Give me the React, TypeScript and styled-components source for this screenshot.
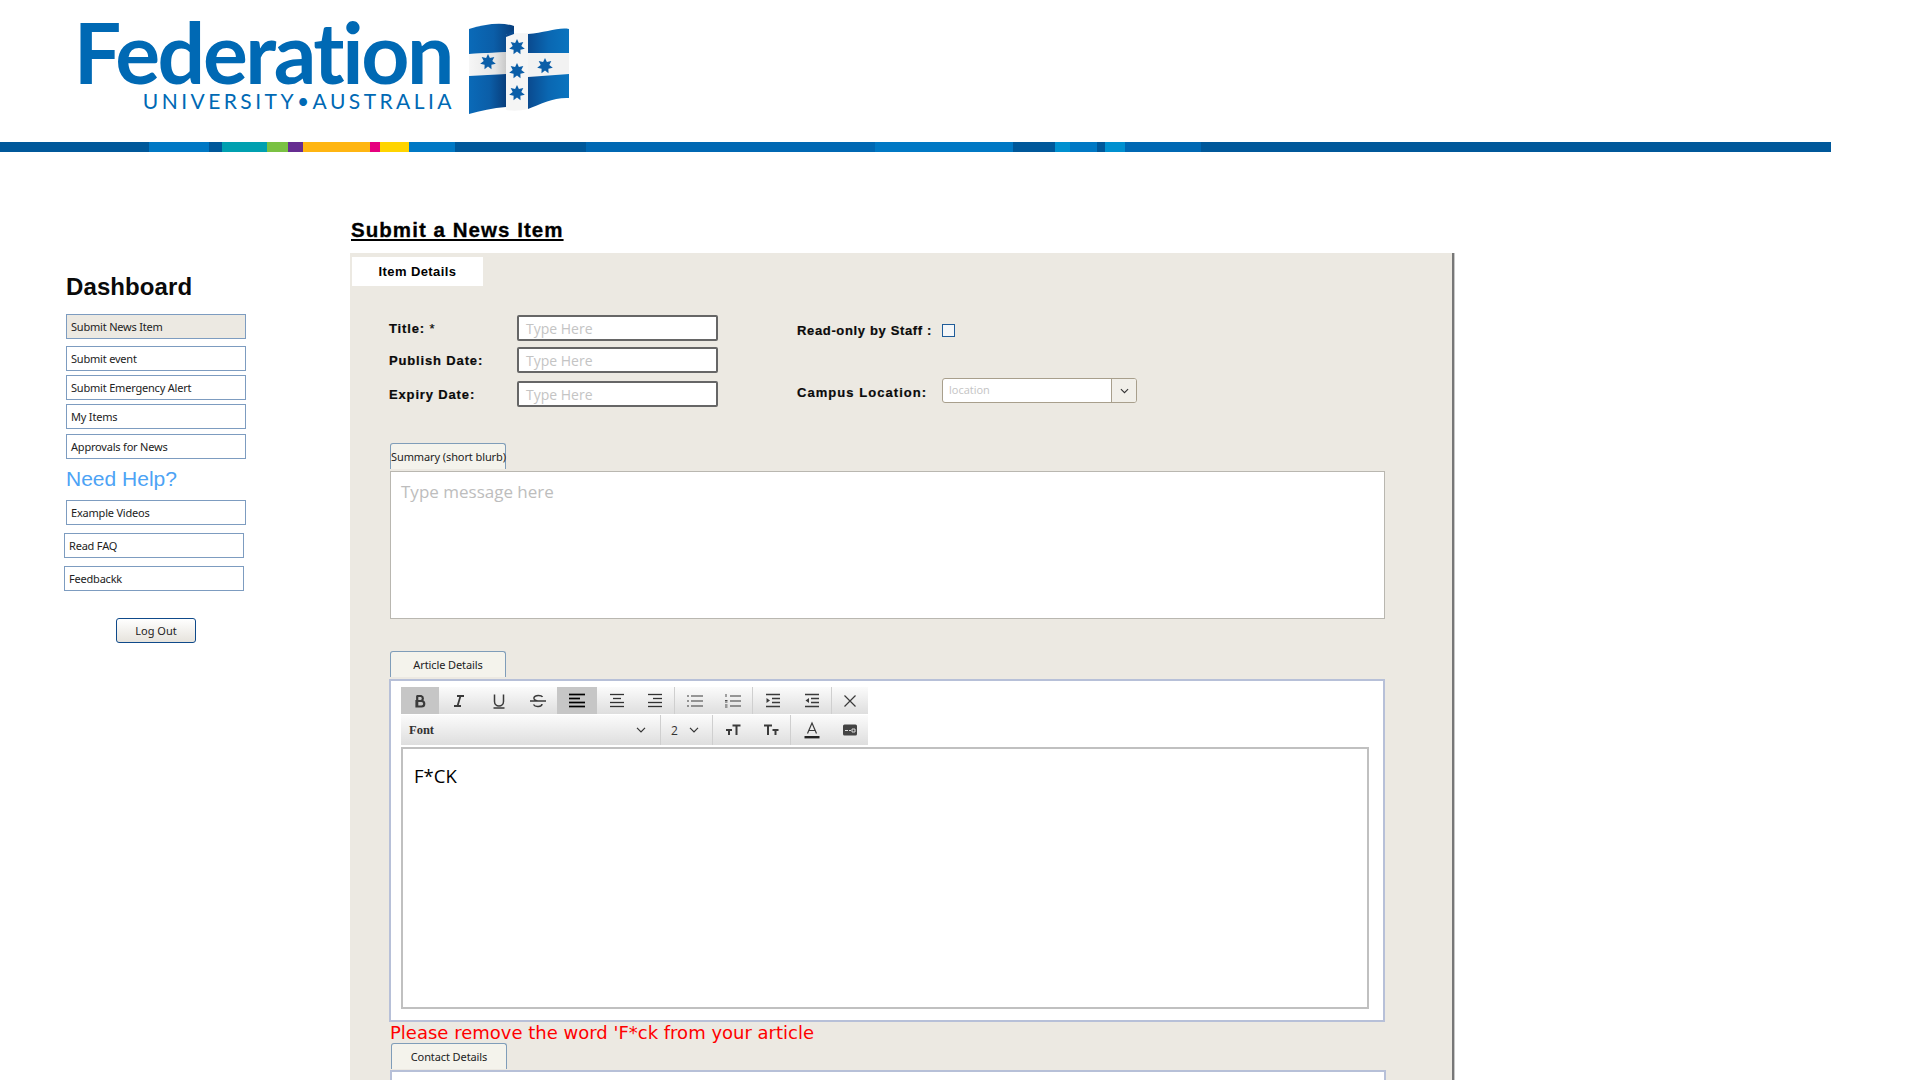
import { ReactNode } from "react";
import styled, { createGlobalStyle } from "styled-components";

const DARK = "#00589a";
const BLUE = "#0078c4";
const MID = "#0068b3";
const SKY = "#0090d0";

// widths of the stripe blocks, left to right
const stripes: [number, string][] = [
  [149, DARK], [60, BLUE], [13, DARK], [45, "#00a0b0"], [21, "#7ac143"],
  [15, "#662d91"], [67, "#ffb511"], [10, "#e6007e"], [29, "#ffd400"],
  [46, BLUE], [131, DARK], [289, MID], [138, BLUE], [42, DARK], [15, SKY],
  [27, BLUE], [8, DARK], [20, SKY], [76, MID], [630, DARK],
];

const GlobalStyle = createGlobalStyle`
  html, body {
    margin: 0;
    padding: 0;
    height: 1080px;
    overflow: hidden;
    background: #fff;
  }
  * {
    box-sizing: border-box;
  }
`;

const Page = styled.div`
  width: 1920px;
  height: 1080px;
  overflow: hidden;
  font-family: "Liberation Sans", Arial, sans-serif;
`;

const Header = styled.header`
  height: 142px;
  padding: 10px 0 0 78px;
  display: flex;
  align-items: flex-start;
`;

const LogoText = styled.div`
  width: 374px;
  padding-top: 6px;
  display: flex;
  flex-direction: column;
  align-items: flex-end;
  color: #0069b4;
`;

const LogoName = styled.div`
  font-family: Lato, sans-serif;
  font-size: 84px;
  font-weight: 700;
  line-height: 72px;
  letter-spacing: -2.4px;
  white-space: nowrap;
`;

const LogoSub = styled.div`
  font-family: Lato, sans-serif;
  font-size: 21px;
  line-height: 20px;
  letter-spacing: 3.45px;
  margin: 3px -3px 0 0;
  white-space: nowrap;
`;

const FlagBox = styled.div`
  margin: 0 0 0 8px;
  line-height: 0;
`;

const StripeBar = styled.div`
  display: flex;
  height: 10px;
  width: 1831px;
`;

const Stripe = styled.div<{ $w: number; $c: string }>`
  flex: 0 0 ${(p) => p.$w}px;
  background: ${(p) => p.$c};
`;

const Content = styled.div`
  display: flex;
  align-items: flex-start;
`;

const Sidebar = styled.aside`
  width: 350px;
  flex: none;
  padding: 119px 0 0 66px;
`;

const SideTitle = styled.h2`
  margin: 0 0 11px;
  font-size: 24px;
  line-height: 32px;
  font-weight: 700;
  color: #0a0a0a;
  letter-spacing: 0.1px;
`;

const HelpTitle = styled.h3`
  margin: 4px 0 5px;
  font-size: 21px;
  line-height: 32px;
  font-weight: 400;
  color: #4da3f5;
`;

const NavItem = styled.div<{ $active?: boolean; $top?: number; $left?: number }>`
  width: 180px;
  height: 25px;
  margin-top: ${(p) => p.$top ?? 0}px;
  margin-left: ${(p) => p.$left ?? 0}px;
  padding-left: 4px;
  border: 1px solid #7d9cc0;
  background: ${(p) => (p.$active ? "#ece9e2" : "#fff")};
  color: #222;
  font-family: "Noto Sans", sans-serif;
  font-size: 11px;
  line-height: 23px;
  letter-spacing: -0.2px;
  white-space: nowrap;
`;

const LogoutRow = styled.div`
  width: 180px;
  margin-top: 27px;
  display: flex;
  justify-content: center;
`;

const LogoutButton = styled.div`
  width: 80px;
  height: 25px;
  border: 1px solid #0f4a8a;
  border-radius: 3px;
  background: linear-gradient(#fff, #e6e3dc);
  color: #222;
  font-family: "Noto Sans", sans-serif;
  font-size: 11px;
  line-height: 23px;
  text-align: center;
`;

const Main = styled.main`
  width: 1106px;
  flex: none;
  padding-top: 65px;
`;

const PageTitle = styled.h1`
  margin: 0 0 11px 1px;
  font-size: 20.5px;
  line-height: 25px;
  font-weight: 700;
  letter-spacing: 1.05px;
  color: #000;
  text-decoration: underline;
  -webkit-text-stroke: 0.3px #000;
`;

const Panel = styled.section`
  width: 1104px;
  min-height: 900px;
  padding: 4px 0 0 2px;
  background: #ece9e2;
  border-right: 2px solid #777;
  box-shadow: 1px 0 0 #c9c9c9;
`;

const DetailsTab = styled.div`
  width: 131px;
  height: 29px;
  background: #fff;
  font-size: 13px;
  font-weight: 700;
  line-height: 29px;
  letter-spacing: 0.4px;
  text-align: center;
  color: #000;
`;

const PanelBody = styled.div`
  padding: 29px 0 0 38px;
`;

const FormGrid = styled.div`
  display: flex;
  height: 92px;
`;

const FieldColumn = styled.div`
  width: 407px;
  display: flex;
  flex-direction: column;
`;

const FieldRow = styled.div<{ $top?: number }>`
  display: flex;
  align-items: center;
  height: 26px;
  margin-top: ${(p) => p.$top ?? 0}px;
`;

const Label = styled.label`
  width: 128px;
  margin-left: -1px;
  flex: none;
  font-size: 13px;
  font-weight: 700;
  letter-spacing: 0.85px;
  color: #0a0a0a;
  white-space: nowrap;
  -webkit-text-stroke: 0.2px #0a0a0a;
`;

const Stars = styled.span`
  font-weight: 400;
`;

const TextField = styled.div`
  width: 201px;
  height: 26px;
  padding-left: 7px;
  border: 2px solid #666;
  border-radius: 2px;
  background: #fff;
  color: #c4c4c4;
  font-family: "Open Sans", sans-serif;
  font-size: 14px;
  line-height: 24px;
`;

const OptionColumn = styled.div`
  display: flex;
  flex-direction: column;
`;

const OptionRow = styled.div<{ $top: number }>`
  display: flex;
  align-items: center;
  height: 25px;
  margin-top: ${(p) => p.$top}px;
`;

const OptionLabel = styled.label<{ $spacing: number; $drop?: number }>`
  width: 145px;
  flex: none;
  padding-top: ${(p) => p.$drop ?? 0}px;
  font-size: 13px;
  font-weight: 700;
  letter-spacing: ${(p) => p.$spacing}px;
  color: #0a0a0a;
  white-space: nowrap;
  -webkit-text-stroke: 0.2px #0a0a0a;
`;

const CheckBox = styled.div`
  width: 13px;
  height: 13px;
  border: 1px solid #1f5c99;
  background: #f4f6f8;
`;

const LocationSelect = styled.div`
  width: 195px;
  height: 25px;
  display: flex;
  border: 1px solid #a89f8c;
  border-radius: 3px;
  background: #fff;
  overflow: hidden;
`;

const LocationText = styled.div`
  flex: 1;
  padding-left: 6px;
  color: #c4c4c4;
  font-family: "Open Sans", sans-serif;
  font-size: 11px;
  line-height: 22px;
`;

const LocationButton = styled.div`
  width: 25px;
  border-left: 1px solid #a89f8c;
  background: #f1efe9;
  display: flex;
  align-items: center;
  justify-content: center;
  color: #333;
`;

const SectionTab = styled.div<{ $left?: number; $top: number }>`
  width: 116px;
  height: 26px;
  margin-top: ${(p) => p.$top}px;
  margin-left: ${(p) => p.$left ?? 0}px;
  border: 1px solid #7f9db9;
  border-bottom: none;
  border-radius: 3px 3px 0 0;
  background: #f4f3ec;
  color: #222;
  font-family: "Noto Sans", sans-serif;
  font-size: 11px;
  line-height: 25px;
  letter-spacing: -0.1px;
  text-align: center;
  white-space: nowrap;
`;

const SummaryBox = styled.div`
  width: 995px;
  height: 148px;
  margin-top: 2px;
  padding: 6px 0 0 10px;
  border: 1px solid #b9b7b0;
  background: #fff;
  color: #bdbdbd;
  font-family: "Open Sans", sans-serif;
  font-size: 17px;
  line-height: 28px;
`;

const EditorBox = styled.div`
  width: 996px;
  height: 343px;
  margin-top: 2px;
  margin-left: -1px;
  padding: 6px 0 0 10px;
  border: 2px solid #b7c0d8;
  background: #fff;
`;

const ToolRow = styled.div<{ $h: number }>`
  width: 467px;
  height: ${(p) => p.$h}px;
  margin-bottom: 1px;
  display: flex;
  background: linear-gradient(#fbfbfb, #dedede);
`;

const ToolButton = styled.div<{ $w: number; $active?: boolean; $sep?: boolean }>`
  flex: 0 0 ${(p) => p.$w}px;
  display: flex;
  align-items: center;
  justify-content: center;
  background: ${(p) => (p.$active ? "#c6c6c6" : "transparent")};
  border-right: ${(p) => (p.$sep ? "1px solid #cfcfcf" : "none")};
  color: #3a3a3a;
`;

const FontPicker = styled.div`
  flex: 0 0 260px;
  display: flex;
  align-items: center;
  justify-content: space-between;
  padding: 0 14px 0 8px;
  border-right: 1px solid #cfcfcf;
  color: #333;
  font-family: "Liberation Serif", serif;
  font-size: 12.5px;
  font-weight: 700;
`;

const SizePicker = styled.div`
  flex: 0 0 52px;
  display: flex;
  align-items: center;
  justify-content: space-between;
  padding: 0 13px 0 10px;
  border-right: 1px solid #cfcfcf;
  color: #333;
  font-family: "Open Sans", sans-serif;
  font-size: 12px;
`;

const EditArea = styled.div`
  width: 968px;
  height: 262px;
  margin-top: 2px;
  padding: 14px 0 0 11px;
  border: 2px solid #c0c0c0;
  color: #000;
  font-family: "Open Sans", sans-serif;
  font-size: 18.5px;
  line-height: 26px;
`;

const ErrorText = styled.div`
  height: 20px;
  color: #f00;
  font-family: "DejaVu Sans", sans-serif;
  font-size: 18px;
  line-height: 22px;
  white-space: nowrap;
`;

const ContactBox = styled.div`
  width: 996px;
  height: 120px;
  margin-top: 1px;
  border: 2px solid #b7c0d8;
  background: #fff;
`;

const starPoints = (cx: number, cy: number, r: number) => {
  const pts: string[] = [];
  for (let i = 0; i < 14; i++) {
    const a = (Math.PI * i) / 7 - Math.PI / 2;
    const d = i % 2 === 0 ? r : r * 0.55;
    pts.push(`${(cx + d * Math.cos(a)).toFixed(1)},${(cy + d * Math.sin(a)).toFixed(1)}`);
  }
  return pts.join(" ");
};

const Flag = () => (
  <svg width="120" height="110" viewBox="0 0 120 110">
    <defs>
      <linearGradient id="leftBlue" x1="0" x2="1" y1="0" y2="0">
        <stop offset="0" stopColor="#0a6ab8" />
        <stop offset="0.55" stopColor="#0b5ea8" />
        <stop offset="1" stopColor="#083e7c" />
      </linearGradient>
      <linearGradient id="rightBlue" x1="0" x2="1" y1="0" y2="0">
        <stop offset="0" stopColor="#0a4a8f" />
        <stop offset="0.5" stopColor="#0a67b2" />
        <stop offset="1" stopColor="#0a74bf" />
      </linearGradient>
      <linearGradient id="whiteBand" x1="0" x2="1" y1="0" y2="0">
        <stop offset="0" stopColor="#f6f6f6" />
        <stop offset="0.7" stopColor="#e6e6e6" />
        <stop offset="1" stopColor="#c9c9c9" />
      </linearGradient>
    </defs>
    <path d="M9 19C25 14 42 12 54 16V42L9 44Z" fill="url(#leftBlue)" />
    <path d="M9 44L46 42V64L9 66Z" fill="url(#whiteBand)" />
    <path d="M9 66L46 64V97C33 98 20 101 9 104Z" fill="url(#leftBlue)" />
    <path d="M68 24C85 23 98 17 109 19V43H68Z" fill="url(#rightBlue)" />
    <path d="M68 43H109V64L68 67Z" fill="#f2f2f2" />
    <path d="M68 67L109 64V88C95 87 80 94 68 99Z" fill="url(#rightBlue)" />
    <path d="M46 25C52 22 60 24 68 23V99C60 101 52 101 46 100Z" fill="#f5f5f5" />
    <path d="M46 25C48 22 52 22 54 20V24L46 27Z" fill="#0a4a8f" />
    {[[28, 52], [57, 37], [57, 61], [57, 83], [85, 56]].map(([x, y]) => (
      <polygon key={`${x}-${y}`} points={starPoints(x, y, 8)} fill="#0b5ea8" />
    ))}
  </svg>
);

const Glyph = ({ children, w = 20, h = 20 }: { children: ReactNode; w?: number; h?: number }) => (
  <svg width={w} height={h} viewBox={`0 0 ${w} ${h}`} fill="none" stroke="currentColor" strokeWidth="1.4">
    {children}
  </svg>
);

const Lines = ({ rows }: { rows: [number, number][] }) => (
  <>
    {rows.map(([x1, x2], i) => (
      <line key={i} x1={x1} x2={x2} y1={3.5 + i * 4} y2={3.5 + i * 4} />
    ))}
  </>
);

const BoldIcon = () => (
  <Glyph>
    <path d="M6.5 5h4.5a2.6 2.6 0 0 1 0 5H6.5M6.5 10h5a2.7 2.7 0 0 1 0 5.5h-5ZM7.2 5v10.5" strokeWidth="2.2" />
  </Glyph>
);

const ItalicIcon = () => (
  <Glyph>
    <path d="M8 5h7M5 15h7M11.5 5l-3 10" strokeWidth="1.8" />
  </Glyph>
);

const UnderlineIcon = () => (
  <Glyph>
    <path d="M5.5 3.5v7a4.5 4.5 0 0 0 9 0v-7M4.5 17h11" strokeWidth="1.5" />
  </Glyph>
);

const StrikeIcon = () => (
  <Glyph>
    <path d="M14.5 6c-1-2-7.5-2.5-8.5.5-.7 2.5 2 3 4 3.5M14 13c0 3-7 3.5-8.5.5M2 10h16" strokeWidth="1.5" />
  </Glyph>
);

const AlignIcon = ({ rows, bold }: { rows: [number, number][]; bold?: boolean }) => (
  <Glyph>
    <g strokeWidth={bold ? 1.7 : 1.3} color={bold ? "#000" : "#333"}>
      <Lines rows={rows} />
    </g>
  </Glyph>
);

const BulletIcon = () => (
  <Glyph>
    <g strokeWidth="1.2">
      <path d="M6 5h12M6 10h12M6 15h12" />
      <path d="M2 5h2M2 10h2M2 15h2" />
    </g>
  </Glyph>
);

const NumberIcon = () => (
  <Glyph>
    <g strokeWidth="1.2">
      <path d="M7 5h11M7 10h11M7 15h11" />
      <path d="M3 3v3M2 9.5h2.5M2 11h2.5M2 14h2.5M2 16h2.5" strokeWidth="0.9" />
    </g>
  </Glyph>
);

const IndentIcon = ({ out }: { out?: boolean }) => (
  <Glyph>
    <g strokeWidth="1.3">
      <path d="M3 3.5h14M9 7.5h8M9 11.5h8M3 15.5h14" />
    </g>
    <path d={out ? "M7 7l-3.5 2.5L7 12Z" : "M3.5 7L7 9.5 3.5 12Z"} fill="currentColor" stroke="none" />
  </Glyph>
);

const CrossIcon = () => (
  <Glyph>
    <path d="M4.5 4.5l11 11M15.5 4.5l-11 11" strokeWidth="1.2" />
  </Glyph>
);

const Chevron = ({ size = 10 }: { size?: number }) => (
  <svg width={size} height="6" viewBox="0 0 10 6" fill="none" stroke="currentColor" strokeWidth="1.2">
    <path d="M1 .8l4 4 4-4" />
  </svg>
);

// small T next to a big T, or the other way round
const TextSizeIcon = ({ grow }: { grow?: boolean }) => (
  <Glyph>
    {grow ? (
      <path d="M3 10h6M6 10v5M9.5 5.5h8M13.5 5.5V15" strokeWidth="2" />
    ) : (
      <path d="M3 5.5h8M7 5.5V15M11.5 10h6M14.5 10v5" strokeWidth="2" />
    )}
  </Glyph>
);

const FontColorIcon = () => (
  <Glyph>
    <path d="M5.5 13.5L10 3l4.5 10.5M7 10.5h6" strokeWidth="1.2" />
    <rect x="2.5" y="16" width="15" height="2.4" fill="#222" stroke="none" />
  </Glyph>
);

const BackColorIcon = () => (
  <Glyph>
    <rect x="3" y="4.5" width="14" height="11" rx="1.5" fill="#444" stroke="none" />
    <path d="M5 10.5h3M9 10.5h2M12 9h3v3h-3Z" stroke="#ddd" strokeWidth="1" />
  </Glyph>
);

const App = () => (
  <Page>
    <GlobalStyle />
    <Header>
      <LogoText>
        <LogoName>Federation</LogoName>
        <LogoSub>UNIVERSITY•AUSTRALIA</LogoSub>
      </LogoText>
      <FlagBox>
        <Flag />
      </FlagBox>
    </Header>
    <StripeBar>
      {stripes.map(([w, c], i) => (
        <Stripe key={i} $w={w} $c={c} />
      ))}
    </StripeBar>
    <Content>
      <Sidebar>
        <SideTitle>Dashboard</SideTitle>
        <NavItem $active>Submit News Item</NavItem>
        <NavItem $top={7}>Submit event</NavItem>
        <NavItem $top={4}>Submit Emergency Alert</NavItem>
        <NavItem $top={4}>My Items</NavItem>
        <NavItem $top={5}>Approvals for News</NavItem>
        <HelpTitle>Need Help?</HelpTitle>
        <NavItem>Example Videos</NavItem>
        <NavItem $top={8} $left={-2}>Read FAQ</NavItem>
        <NavItem $top={8} $left={-2}>Feedbackk</NavItem>
        <LogoutRow>
          <LogoutButton>Log Out</LogoutButton>
        </LogoutRow>
      </Sidebar>
      <Main>
        <PageTitle>Submit a News Item</PageTitle>
        <Panel>
          <DetailsTab>Item Details</DetailsTab>
          <PanelBody>
            <FormGrid>
              <FieldColumn>
                <FieldRow>
                  <Label>
                    Title: <Stars>*</Stars>
                  </Label>
                  <TextField>Type Here</TextField>
                </FieldRow>
                <FieldRow $top={6}>
                  <Label>Publish Date:</Label>
                  <TextField>Type Here</TextField>
                </FieldRow>
                <FieldRow $top={8}>
                  <Label>Expiry Date:</Label>
                  <TextField>Type Here</TextField>
                </FieldRow>
              </FieldColumn>
              <OptionColumn>
                <OptionRow $top={3}>
                  <OptionLabel $spacing={0.65}>Read-only by Staff :</OptionLabel>
                  <CheckBox />
                </OptionRow>
                <OptionRow $top={35}>
                  <OptionLabel $spacing={1.05} $drop={4}>Campus Location:</OptionLabel>
                  <LocationSelect>
                    <LocationText>location</LocationText>
                    <LocationButton>
                      <Chevron size={9} />
                    </LocationButton>
                  </LocationSelect>
                </OptionRow>
              </OptionColumn>
            </FormGrid>

            <SectionTab $top={36}>Summary (short blurb)</SectionTab>
            <SummaryBox>Type message here</SummaryBox>

            <SectionTab $top={32}>Article Details</SectionTab>
            <EditorBox>
              <ToolRow $h={27}>
                <ToolButton $w={38} $active><BoldIcon /></ToolButton>
                <ToolButton $w={40}><ItalicIcon /></ToolButton>
                <ToolButton $w={39}><UnderlineIcon /></ToolButton>
                <ToolButton $w={39}><StrikeIcon /></ToolButton>
                <ToolButton $w={40} $active>
                  <AlignIcon bold rows={[[2, 18], [2, 13], [2, 18], [2, 18]]} />
                </ToolButton>
                <ToolButton $w={39}>
                  <AlignIcon rows={[[3, 17], [6, 14], [3, 17], [3, 17]]} />
                </ToolButton>
                <ToolButton $w={39} $sep>
                  <AlignIcon rows={[[3, 17], [8, 17], [3, 17], [3, 17]]} />
                </ToolButton>
                <ToolButton $w={39}><BulletIcon /></ToolButton>
                <ToolButton $w={39} $sep><NumberIcon /></ToolButton>
                <ToolButton $w={40}><IndentIcon /></ToolButton>
                <ToolButton $w={39} $sep><IndentIcon out /></ToolButton>
                <ToolButton $w={35}><CrossIcon /></ToolButton>
              </ToolRow>
              <ToolRow $h={30}>
                <FontPicker>
                  Font
                  <Chevron />
                </FontPicker>
                <SizePicker>
                  2
                  <Chevron />
                </SizePicker>
                <ToolButton $w={39}><TextSizeIcon grow /></ToolButton>
                <ToolButton $w={39} $sep><TextSizeIcon /></ToolButton>
                <ToolButton $w={41}><FontColorIcon /></ToolButton>
                <ToolButton $w={36}><BackColorIcon /></ToolButton>
              </ToolRow>
              <EditArea>F*CK</EditArea>
            </EditorBox>
            <ErrorText>Please remove the word 'F*ck from your article</ErrorText>

            <SectionTab $top={1} $left={1}>Contact Details</SectionTab>
            <ContactBox />
          </PanelBody>
        </Panel>
      </Main>
    </Content>
  </Page>
);

export default App;
